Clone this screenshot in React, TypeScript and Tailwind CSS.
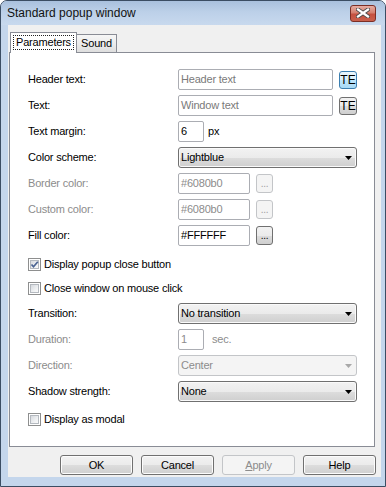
/**
 * Standard popup window
 *
 * Windows 7 style property dialog with a "Parameters" tab.
 */

import React from "react";

const FONT = "font-['Liberation_Sans',Arial,sans-serif]";

export default function App() {
  return (
    <div
      className={`w-[386px] h-[487px] flex flex-col border border-[#3b4d63] rounded-t-[7px] bg-[#c4d6ec] ${FONT} text-[11px] tracking-[-0.2px] text-black`}
    >
      {/* Title bar */}
      <div className="h-[24px] flex items-center justify-between pl-[6px] pr-[9px] bg-[linear-gradient(180deg,#a9c0dd_0%,#bcd0e8_45%,#c8d9ee_100%)] rounded-t-[6px]">
        <span className="text-[12px] tracking-normal text-[#111] leading-none">Standard popup window</span>
        <CloseButton />
      </div>

      {/* Client area */}
      <div className="ml-[7px] mr-[4px] h-[452px] bg-[#f0f0f0] pt-[7px] flex flex-col">
        {/* Tabs */}
        <div className="h-[20px] flex items-end pl-[2px]">
          <div className="relative z-10 -mb-px h-[21px] w-[67px] border border-b-0 border-[#898c95] bg-white flex justify-center pt-[2px]">
            <span className="h-[15px] w-[61px] border border-dotted border-[#222] flex items-center justify-center leading-none">
              Parameters
            </span>
          </div>
          <div className="h-[18px] w-[40px] border border-l-0 border-b-0 border-[#898c95] bg-[linear-gradient(180deg,#f6f6f6_0%,#ececec_50%,#dedede_100%)] flex items-center justify-center leading-none">
            Sound
          </div>
        </div>

        {/* Tab panel */}
        <div className="ml-[1px] w-[366px] h-[395px] border border-[#898c95] bg-white pt-[16px] pl-[18px]">
          <div className="flex flex-col gap-[5px]">
            <Row label="Header text:">
              <TextBox className="w-[155px]" placeholder="Header text" />
              <TeButton hover />
            </Row>
            <Row label="Text:">
              <TextBox className="w-[155px]" placeholder="Window text" />
              <TeButton />
            </Row>
            <Row label="Text margin:">
              <TextBox className="w-[26px]" value="6" />
              <span className="ml-[4px]">px</span>
            </Row>
            <Row label="Color scheme:">
              <Combo value="Lightblue" />
            </Row>
            <Row label="Border color:" disabled>
              <TextBox className="w-[72px]" value="#6080b0" disabled />
              <EllipsisButton disabled />
            </Row>
            <Row label="Custom color:" disabled>
              <TextBox className="w-[72px]" value="#6080b0" disabled />
              <EllipsisButton disabled />
            </Row>
            <Row label="Fill color:">
              <TextBox className="w-[72px]" value="#FFFFFF" />
              <EllipsisButton />
            </Row>
          </div>

          <div className="mt-[10px] flex flex-col gap-[7px]">
            <CheckRow checked label="Display popup close button" />
            <CheckRow label="Close window on mouse click" />
          </div>

          <div className="mt-[6px] flex flex-col gap-[5px]">
            <Row label="Transition:">
              <Combo value="No transition" />
            </Row>
            <Row label="Duration:" disabled>
              <TextBox className="w-[26px]" value="1" disabled />
              <span className="ml-[8px] text-[#8c8c8c]">sec.</span>
            </Row>
            <Row label="Direction:" disabled>
              <Combo value="Center" disabled />
            </Row>
            <Row label="Shadow strength:">
              <Combo value="None" />
            </Row>
          </div>

          <div className="mt-[9px]">
            <CheckRow label="Display as modal" />
          </div>
        </div>

        {/* Dialog buttons */}
        <div className="mt-[8px] flex justify-end gap-[8px] pr-[5px]">
          <DialogButton>OK</DialogButton>
          <DialogButton>Cancel</DialogButton>
          <DialogButton disabled>
            <span className="underline">A</span>pply
          </DialogButton>
          <DialogButton>Help</DialogButton>
        </div>
      </div>
    </div>
  );
}

function Row({
  label,
  disabled,
  children,
}: {
  label: string;
  disabled?: boolean;
  children: React.ReactNode;
}) {
  return (
    <div className="h-[21px] flex items-center">
      <span className={`w-[150px] shrink-0 ${disabled ? "text-[#8c8c8c]" : "text-black"}`}>
        {label}
      </span>
      {children}
    </div>
  );
}

function TextBox({
  className,
  value,
  placeholder,
  disabled,
}: {
  className: string;
  value?: string;
  placeholder?: string;
  disabled?: boolean;
}) {
  return (
    <div
      className={`h-[21px] ${className} border border-[#abadb3] rounded-[2px] bg-white px-[2px] flex items-center leading-none ${
        value ? (disabled ? "text-[#8c8c8c]" : "text-black") : "text-[#7a7a7a]"
      }`}
    >
      {value ?? placeholder}
    </div>
  );
}

function Combo({ value, disabled }: { value: string; disabled?: boolean }) {
  return (
    <div
      className={`h-[21px] w-[179px] rounded-[3px] border flex items-center justify-between pl-[2px] pr-[4px] leading-none ${
        disabled
          ? "border-[#c3c5c8] bg-[#f4f4f4] text-[#8c8c8c]"
          : "border-[#707070] bg-[linear-gradient(180deg,#f2f2f2_0%,#ebebeb_50%,#dddddd_51%,#cfcfcf_100%)] shadow-[inset_0_0_0_1px_#fafafa] text-black"
      }`}
    >
      <span>{value}</span>
      <svg width="7" height="4" viewBox="0 0 7 4">
        <path d="M0 0h7L3.5 4z" fill={disabled ? "#a8a8a8" : "#000"} />
      </svg>
    </div>
  );
}

function TeButton({ hover }: { hover?: boolean }) {
  return (
    <div
      className={`ml-[6px] h-[18px] w-[18px] rounded-[3px] border flex items-center justify-center leading-none text-[12px] tracking-normal ${
        hover
          ? "border-[#3c7fb1] bg-[linear-gradient(180deg,#eaf6fd_0%,#d9f0fc_50%,#bee6fd_51%,#a7d9f5_100%)]"
          : "border-[#707070] bg-[linear-gradient(180deg,#f2f2f2_0%,#ebebeb_50%,#dddddd_51%,#cfcfcf_100%)]"
      }`}
    >
      TE
    </div>
  );
}

function EllipsisButton({ disabled }: { disabled?: boolean }) {
  return (
    <div
      className={`ml-[6px] h-[19px] w-[17px] rounded-[3px] border flex items-end justify-center pb-[3px] leading-none text-[10px] ${
        disabled
          ? "border-[#c3c5c8] bg-[#f4f4f4] text-[#a0a0a0]"
          : "border-[#707070] bg-[linear-gradient(180deg,#f2f2f2_0%,#ebebeb_50%,#dddddd_51%,#cfcfcf_100%)] text-black"
      }`}
    >
      ...
    </div>
  );
}

function CheckRow({ label, checked }: { label: string; checked?: boolean }) {
  return (
    <div className="h-[17px] flex items-center gap-[3px]">
      <div className="h-[13px] w-[13px] border border-[#8e8f8f] bg-white p-[1px] relative">
        <div className="h-full w-full border border-[#b4b9bf] bg-[linear-gradient(135deg,#d6d9de_0%,#eef0f2_60%,#fafafa_100%)]" />
        {checked && (
          <svg className="absolute left-0 top-0" width="11" height="11" viewBox="0 0 11 11">
            <path d="M2.5 5.5l2 2.3L8.8 2.8" stroke="#4a6392" strokeWidth="1.7" fill="none" />
          </svg>
        )}
      </div>
      <span>{label}</span>
    </div>
  );
}

function DialogButton({
  disabled,
  children,
}: {
  disabled?: boolean;
  children: React.ReactNode;
}) {
  return (
    <div
      className={`h-[20px] w-[73px] rounded-[3px] border flex items-center justify-center leading-none ${
        disabled
          ? "border-[#c3c5c8] bg-[#f4f4f4] text-[#8c8c8c]"
          : "border-[#707070] bg-[linear-gradient(180deg,#f2f2f2_0%,#ebebeb_50%,#dddddd_51%,#cfcfcf_100%)] shadow-[inset_0_0_0_1px_#fcfcfc] text-black"
      }`}
    >
      <span>{children}</span>
    </div>
  );
}

function CloseButton() {
  return (
    <div className="h-[17px] w-[26px] rounded-[3px] border border-[#7b2e25] bg-[linear-gradient(180deg,#e6ada3_0%,#d5806f_45%,#c5503f_55%,#c9604c_100%)] flex items-center justify-center">
      <svg width="14" height="10" viewBox="0 0 14 10">
        <path d="M2 1.5l10 7M12 1.5l-10 7" stroke="#4a4a4a" strokeWidth="4" strokeLinecap="square" />
        <path d="M2 1.5l10 7M12 1.5l-10 7" stroke="#fff" strokeWidth="2.2" strokeLinecap="square" />
      </svg>
    </div>
  );
}
